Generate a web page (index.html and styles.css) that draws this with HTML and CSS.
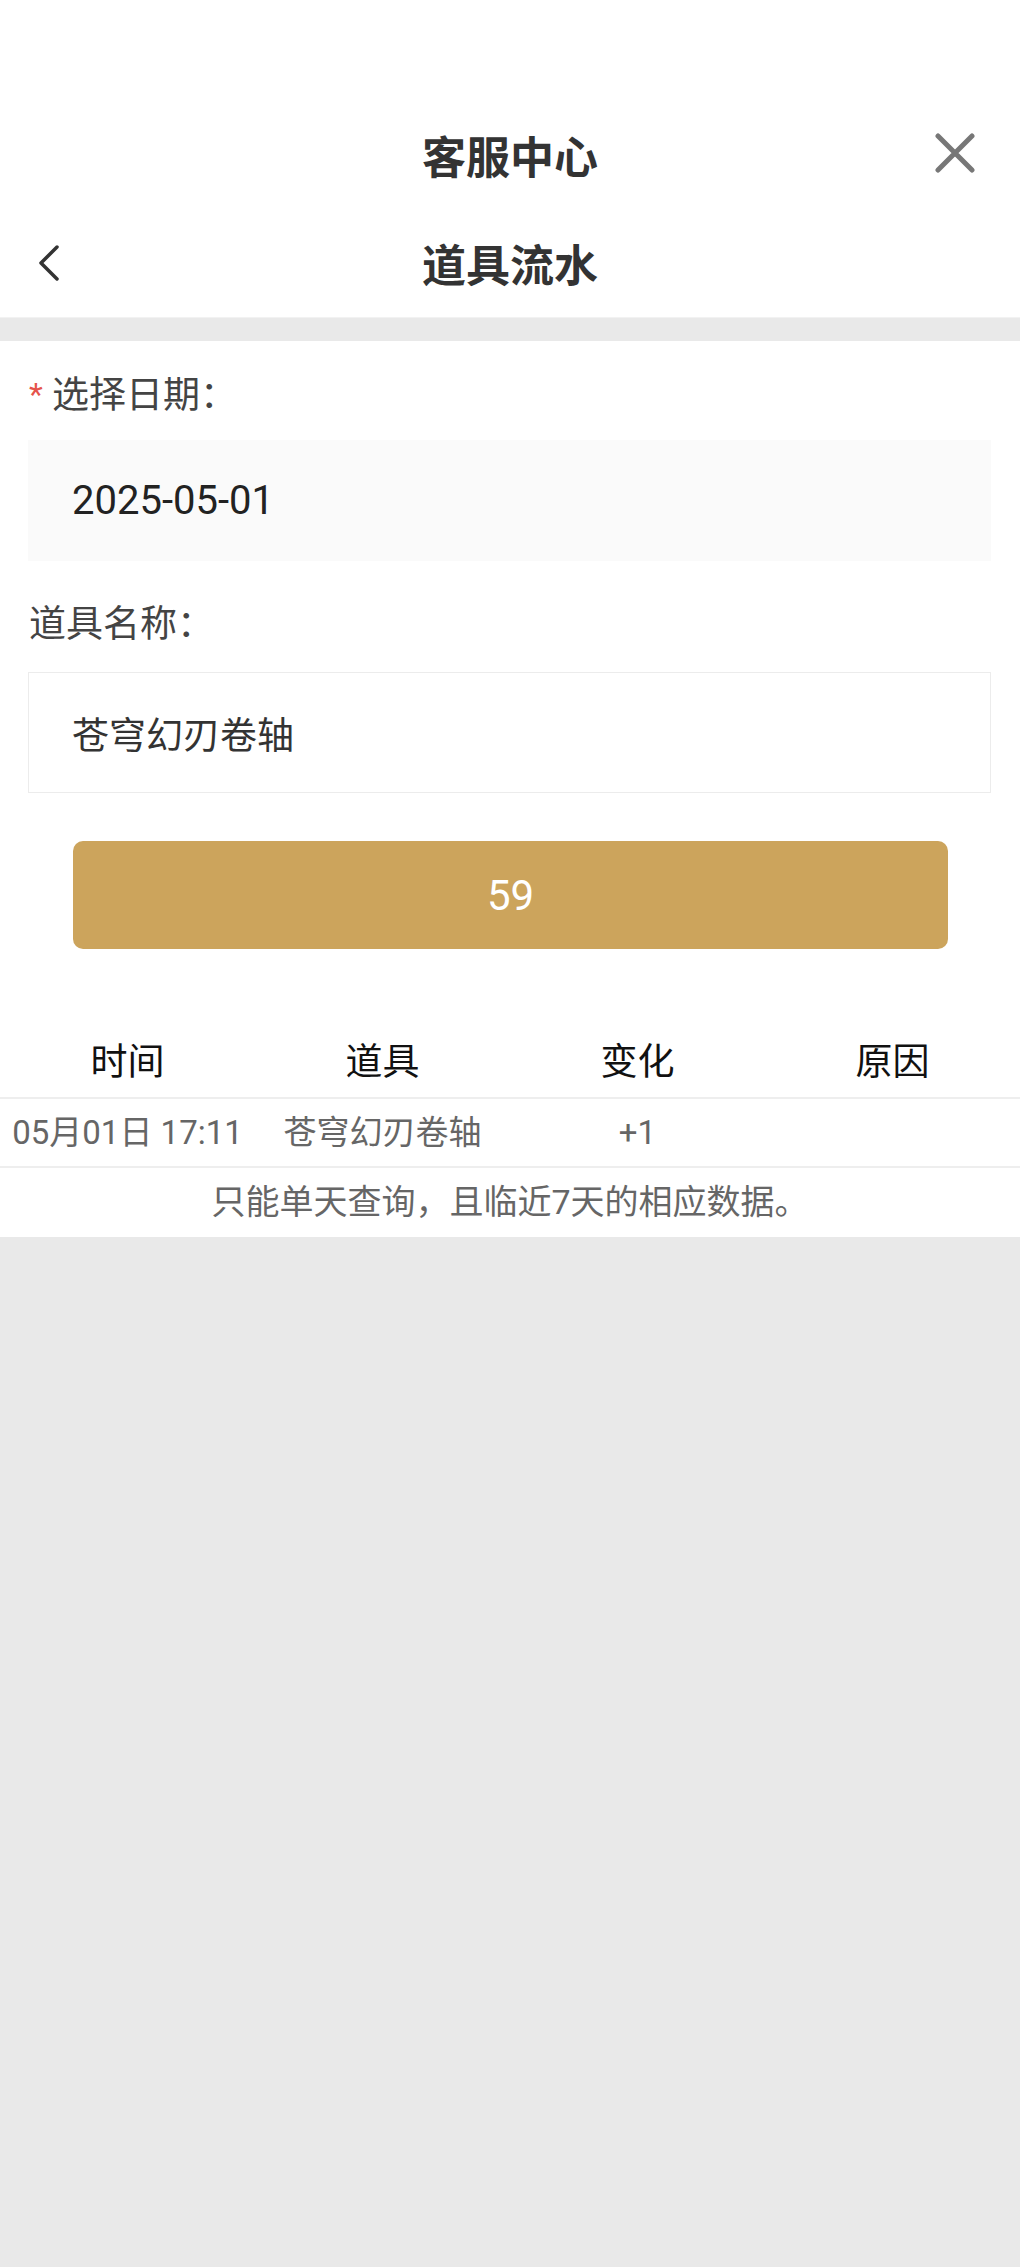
FILE: index.html
```html
<!DOCTYPE html>
<html lang="zh-CN">
<head>
    <meta charset="UTF-8">
    <meta name="viewport" content="width=device-width, initial-scale=1.0">
    <title>道具流水</title>
    <link rel="stylesheet" href="styles.css">
</head>
<body>

    <div class="topbar">
        <div class="title-row">
            <span class="title">客服中心</span>
            <span class="close-btn">
                <svg width="40" height="40" viewBox="0 0 40 40"><path d="M3 3 L37 37 M37 3 L3 37" stroke="#777" stroke-width="5" stroke-linecap="round" fill="none"/></svg>
            </span>
        </div>
        <div class="title-row">
            <span class="back-btn">
                <svg width="24" height="40" viewBox="0 0 24 40"><path d="M19 4 L3 20 L19 36" stroke="#333" stroke-width="3.5" stroke-linecap="round" stroke-linejoin="round" fill="none"/></svg>
            </span>
            <span class="title">道具流水</span>
        </div>
    </div>

    <div class="container">
        <div class="field-label label-date"><span class="required">*</span> 选择日期：</div>
        <div class="field-box box-date">2025-05-01</div>

        <div class="field-label label-name">道具名称：</div>
        <div class="field-box box-name">苍穹幻刃卷轴</div>

        <!-- 查询按钮 -->
        <button class="query-btn">59</button>

        <div class="table">
            <div class="table-row table-head">
                <div>时间</div>
                <div>道具</div>
                <div>变化</div>
                <div>原因</div>
            </div>
            <div class="table-row table-body">
                <div>05月01日 17:11</div>
                <div>苍穹幻刃卷轴</div>
                <div>+1</div>
                <div></div>
            </div>
        </div>
        <div class="tip">只能单天查询，且临近7天的相应数据。</div>
    </div>

</body>
</html>
```
FILE: styles.css
```css
body {
    font-family: Roboto, "Noto Sans CJK SC", sans-serif;
    margin: 0;
    background-color: #e9e9e9;
    color: #333;
}

.topbar {
    background-color: white;
    padding-top: 101px;
    height: 216px;
    border-bottom: 1px solid #f2f2f2;
}

.title-row {
    position: relative;
    height: 108px;
    display: flex;
    justify-content: center;
    align-items: center;
}

.title {
    font-size: 44px;
    font-weight: bold;
    color: #333;
}

.close-btn {
    position: absolute;
    right: 45px;
    top: 32px;
    width: 40px;
    height: 40px;
}

.back-btn {
    position: absolute;
    left: 38px;
    top: 34px;
    width: 24px;
    height: 40px;
}

.container {
    margin-top: 23px;
    background-color: white;
    padding-top: 29px;
}

.field-label {
    font-size: 37px;
    line-height: 52px;
    color: #444;
    margin: 0 29px;
}

.required {
    color: #e5534b;
    font-size: 32px;
    vertical-align: top;
    position: relative;
    top: -2px;
}

.label-date {
    margin-bottom: 18px;
}

.label-name {
    margin-top: 38px;
    margin-bottom: 21px;
}

.field-box {
    margin: 0 29px 0 28px;
    height: 121px;
    box-sizing: border-box;
    display: flex;
    align-items: center;
    padding-left: 44px;
}

.box-date {
    background-color: #fafafa;
    font-size: 40px;
    color: #222;
}

.box-name {
    border: 1px solid #ececec;
    font-size: 37px;
    color: #333;
    padding-left: 43px;
}

.query-btn {
    display: block;
    margin: 48px 72px 0 73px;
    width: 875px;
    height: 108px;
    background-color: #cca45c;
    color: white;
    border: none;
    border-radius: 10px;
    font-family: Roboto, "Noto Sans CJK SC", sans-serif;
    font-size: 42px;
}

.table {
    margin-top: 80px;
}

.table-row {
    display: grid;
    grid-template-columns: repeat(4, 1fr);
    text-align: center;
    border-bottom: 2px solid #eeeeee;
}

.table-head {
    height: 68px;
    font-size: 37px;
    line-height: 68px;
    color: #111;
}

.table-body {
    height: 67px;
    font-size: 33px;
    line-height: 67px;
    color: #666;
}

.tip {
    height: 69px;
    line-height: 69px;
    text-align: center;
    font-size: 34px;
    color: #666;
}
```
